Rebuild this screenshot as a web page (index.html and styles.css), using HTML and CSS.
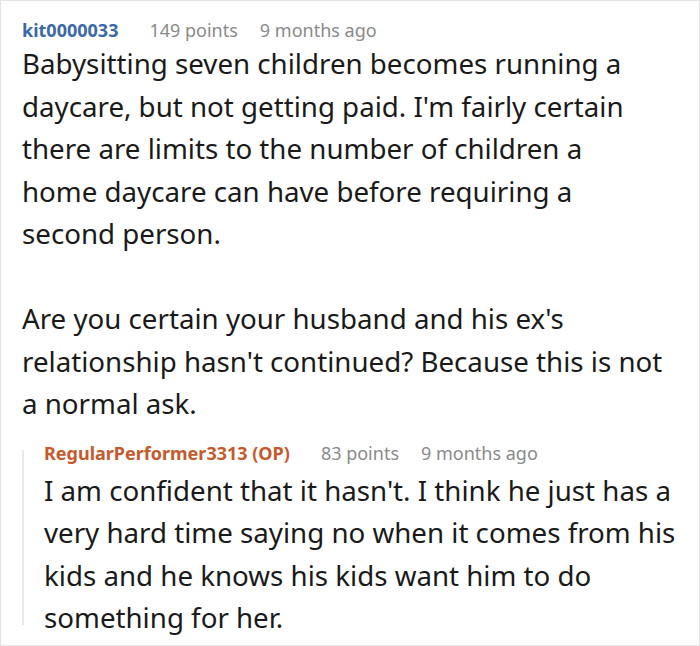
FILE: index.html
```html
<!DOCTYPE html>
<html>
<head>
<meta charset="utf-8">
<link rel="stylesheet" href="styles.css">
</head>
<body>
<div class="thread">
  <div class="comment">
    <div class="meta">
      <span class="author">kit0000033</span>
      <span class="info">149 points</span>
      <span class="info">9 months ago</span>
    </div>
    <div class="body">
      <p>Babysitting seven children becomes running a daycare, but not getting paid. I'm fairly certain there are limits to the number of children a home daycare can have before requiring a second person.</p>
      <p>Are you certain your husband and his ex's relationship hasn't continued? Because this is not a normal ask.</p>
    </div>
    <div class="reply">
      <div class="meta">
        <span class="author op">RegularPerformer3313 (OP)</span>
        <span class="info">83 points</span>
        <span class="info">9 months ago</span>
      </div>
      <div class="body">
        <p>I am confident that it hasn't. I think he just has a very hard time saying no when it comes from his kids and he knows his kids want him to do something for her.</p>
      </div>
    </div>
  </div>
</div>
</body>
</html>
```

FILE: styles.css
```css
html, body {
  margin: 0;
  padding: 0;
  background: #fff;
}
.thread {
  width: 700px;
  height: 646px;
  box-sizing: border-box;
  border: 1px solid #e4e4e4;
  overflow: hidden;
  font-family: "Noto Sans", sans-serif;
  color: #1a1a1a;
}
.comment {
  padding: 17px 0 0 21px;
}
.meta {
  display: flex;
  font-size: 18px;
  line-height: 24px;
}
.author {
  font-weight: bold;
  color: #3a68a8;
  margin-right: 31px;
}
.author.op {
  color: #c55a2d;
}
.info {
  color: #8a8a8a;
  margin-right: 22px;
}
.body {
  font-size: 27.7px;
  line-height: 42.5px;
}
.comment > .body {
  padding-right: 36px;
}
.body p {
  margin: 0 0 42.5px 0;
}
.body p:last-child {
  margin-bottom: 0;
}
.reply {
  margin-top: 16px;
  padding-left: 22px;
  padding-right: 15px;
  background: linear-gradient(#e9e9e9, #e9e9e9) no-repeat 0 9px / 2px calc(100% - 23px);
}
.reply .meta {
  margin-bottom: 4px;
}
```
